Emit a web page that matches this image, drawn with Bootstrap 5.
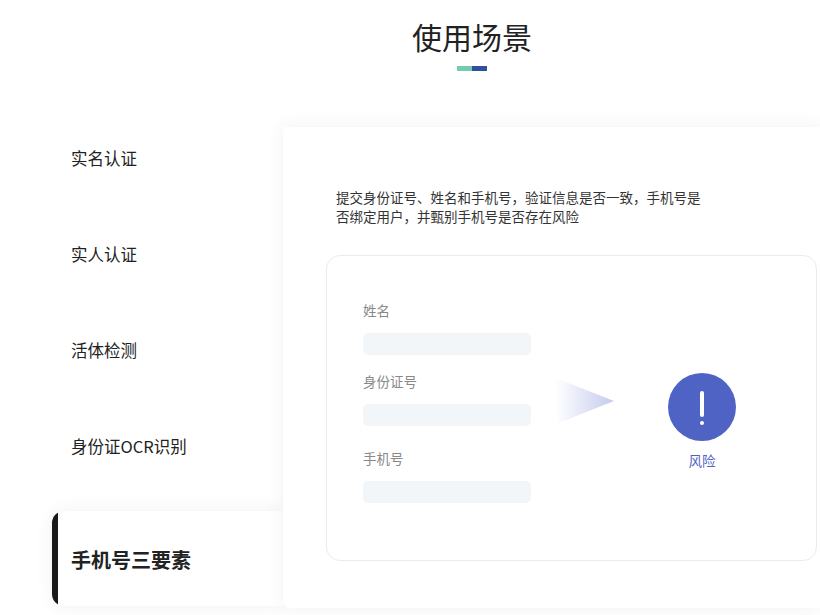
<!DOCTYPE html>
<html lang="zh-CN">
<head>
    <meta charset="UTF-8">
    <meta name="viewport" content="width=device-width, initial-scale=1.0">
    <title>使用场景</title>
    <link href="https://cdn.jsdelivr.net/npm/bootstrap@5.3.0/dist/css/bootstrap.min.css" rel="stylesheet">
    <style>
        html, body {
            height: 615px;
            overflow: hidden;
        }

        body {
            background: #fff;
            color: #222;
            font-family: "Noto Sans CJK SC", "Liberation Sans", sans-serif;
        }

        .scene-page {
            width: 820px;
        }

        .scene-title {
            margin: 0;
            padding: 14px 0 0 124px;
            height: 59px;
            line-height: 45px;
            font-size: 30px;
            font-weight: 400;
            color: #222;
        }

        .title-bar {
            width: 30px;
            height: 5px;
            margin: 7px 0 56px 457px;
            background: linear-gradient(90deg, #74cbb1 50%, #2f5197 50%);
        }

        .scene-tabs {
            width: 283px;
            margin-top: -17px;
            padding-left: 52px;
            flex: none;
        }

        .scene-tab {
            height: 96px;
            padding-left: 19px;
            font-size: 16.5px;
            color: #222;
        }

        .scene-tab-active {
            height: 95px;
            margin-top: 17px;
            padding-top: 2px;
            font-size: 20px;
            font-weight: 700;
            background: linear-gradient(90deg, #1a1a1a 6px, #fff 6px);
            border-radius: 12px 0 0 12px;
            box-shadow: 0 0 18px rgba(40, 60, 100, .07);
        }

        .scene-panel {
            height: 481px;
            flex: 1;
            background: #fff;
            border-radius: 2px 0 0 8px;
            padding: 61px 0 0 43px;
            box-shadow: 0 0 18px rgba(40, 60, 100, .07);
        }

        .scene-desc {
            width: 370px;
            margin: 0 0 29px 10px;
            font-size: 13.5px;
            line-height: 19px;
            color: #333;
        }

        .demo-box {
            width: 491px;
            height: 306px;
            border: 1px solid #e8ecef;
            border-radius: 14px;
            padding: 45px 0 0 36px;
        }

        .demo-fields {
            width: 168px;
        }

        .demo-label {
            height: 20px;
            line-height: 18px;
            font-size: 13.5px;
            color: #888;
        }

        .demo-input {
            height: 22px;
            margin: 12px 0 17px;
            background: #f3f6f9;
            border-radius: 5px;
        }

        .demo-input-wide {
            margin-bottom: 23px;
        }

        .demo-arrow {
            margin: 77px 0 0 25px;
            width: 58px;
            height: 46px;
            flex: none;
        }

        .demo-result {
            margin: 72px 0 0 54px;
            width: 68px;
        }

        .risk-text {
            margin-top: 9px;
            font-size: 13.5px;
            line-height: 20px;
            color: #4f63c4;
        }
    </style>
</head>
<body>
    <div class="scene-page">
        <h1 class="scene-title text-center">使用场景</h1>
        <div class="title-bar"></div>

        <div class="d-flex">
            <!-- Left tabs -->
            <div class="scene-tabs">
                <div class="scene-tab d-flex align-items-center">实名认证</div>
                <div class="scene-tab d-flex align-items-center">实人认证</div>
                <div class="scene-tab d-flex align-items-center">活体检测</div>
                <div class="scene-tab d-flex align-items-center">身份证OCR识别</div>
                <div class="scene-tab scene-tab-active d-flex align-items-center">手机号三要素</div>
            </div>

            <!-- Panel -->
            <div class="scene-panel">
                <p class="scene-desc">提交身份证号、姓名和手机号，验证信息是否一致，手机号是否绑定用户，并甄别手机号是否存在风险</p>
                <div class="demo-box d-flex">
                    <div class="demo-fields">
                        <div class="demo-label">姓名</div>
                        <div class="demo-input"></div>
                        <div class="demo-label">身份证号</div>
                        <div class="demo-input demo-input-wide"></div>
                        <div class="demo-label">手机号</div>
                        <div class="demo-input"></div>
                    </div>
                    <svg class="demo-arrow" viewBox="0 0 58 46">
                        <defs>
                            <linearGradient id="arrowFade" x1="0" x2="1" y1="0" y2="0">
                                <stop offset="0" stop-color="#fff"/>
                                <stop offset="1" stop-color="#c3cbec"/>
                            </linearGradient>
                        </defs>
                        <polygon points="0,0 58,23 0,46" fill="url(#arrowFade)"/>
                    </svg>
                    <div class="demo-result text-center">
                        <svg width="68" height="68" viewBox="0 0 68 68" class="d-block">
                            <circle cx="34" cy="34" r="34" fill="#4f63c4"/>
                            <rect x="32" y="18" width="4" height="26" rx="2" fill="#fff"/>
                            <circle cx="34" cy="50" r="2" fill="#fff"/>
                        </svg>
                        <div class="risk-text">风险</div>
                    </div>
                </div>
            </div>
        </div>
    </div>
</body>
</html>
